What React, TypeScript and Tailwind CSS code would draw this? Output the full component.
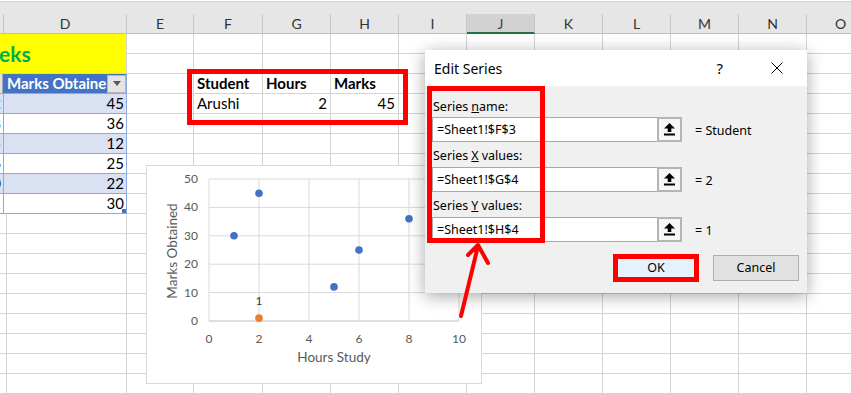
import React from "react";

const COLS =
    "grid-cols-[4px_123px_67px_69px_68px_68px_68px_68px_68px_68px_68px_68px_68px]";
const LETTERS = ["C", "D", "E", "F", "G", "H", "I", "J", "K", "L", "M", "N", "O"];
const HOURS = ["2", "8", "5", "6", "10", "1"];
const MARKS = ["45", "36", "12", "25", "22", "30"];

// chart data (hours, marks)
const POINTS: [number, number][] = [
    [2, 45],
    [8, 36],
    [5, 12],
    [6, 25],
    [10, 22],
    [1, 30],
];

function SheetCell({ r, c }: { r: number; c: number }) {
    const plain =
        "h-5 border-r border-b border-[#d4d4d4] overflow-hidden whitespace-nowrap flex items-center px-[3px] text-[15px] text-black";

    // table header C3:D3
    if (r === 3 && c === 0) {
        return (
            <div className="h-5 bg-[#4472c4] border-b border-[#8ea9db] flex">
                <div className="w-[3px] h-full bg-[#e1e1e1] border-r border-[#a6a6a6]" />
            </div>
        );
    }
    if (r === 3 && c === 1) {
        return (
            <div className="h-5 bg-[#4472c4] border-b border-r border-[#8ea9db] flex items-center pl-[3px] overflow-hidden">
                <span className="flex-1 overflow-hidden whitespace-nowrap text-[15px] font-bold text-white">
                    Marks Obtaine
                </span>
                <span className="w-[19px] h-[18px] bg-[#e4e4e4] border border-[#b5b5b5] flex items-center justify-center shrink-0">
                    <svg width="8" height="5" viewBox="0 0 8 5">
                        <polygon points="0,0 8,0 4,5" fill="#595959" />
                    </svg>
                </span>
            </div>
        );
    }

    // banded rows
    if (r >= 4 && r <= 9 && c <= 1) {
        const band = r % 2 === 0 ? "bg-[#d9e1f2]" : "bg-white";
        const value = c === 0 ? HOURS[r - 4] : MARKS[r - 4];
        return (
            <div
                className={`relative h-5 ${band} border-b border-r border-[#8ea9db] flex items-center justify-end pr-[2px] overflow-hidden text-[15px] text-black`}
            >
                <span className="shrink-0">{value}</span>
                {r === 9 && c === 1 && (
                    <span className="absolute right-0 bottom-0 w-[4px] h-[4px] bg-[#4472c4]" />
                )}
            </div>
        );
    }

    // small table F3:H4
    if (r === 3 && c >= 3 && c <= 5) {
        const label = ["Student", "Hours", "Marks"][c - 3];
        return <div className={`${plain} font-bold`}>{label}</div>;
    }
    if (r === 4 && c === 3) {
        return <div className={plain}>Arushi</div>;
    }
    if (r === 4 && (c === 4 || c === 5)) {
        return <div className={`${plain} justify-end`}>{c === 4 ? "2" : "45"}</div>;
    }

    return <div className={plain} />;
}

function Sheet() {
    const cells: React.ReactNode[] = [];

    LETTERS.forEach((l, c) => {
        const selected = l === "J";
        cells.push(
            <div
                key={`h-${c}`}
                className={
                    selected
                        ? "h-5 bg-[#d2d2d2] border-r border-[#c6c6c6] border-b-2 border-b-[#217346] flex items-center justify-center text-[14px] text-[#444]"
                        : "h-5 bg-[#e6e6e6] border-r border-[#c6c6c6] border-b border-b-[#bdbdbd] flex items-center justify-center text-[14px] text-[#333]"
                }
            >
                {c === 0 ? "" : l}
            </div>
        );
    });

    for (let r = 1; r <= 19; r++) {
        for (let c = 0; c < LETTERS.length; c++) {
            if (r === 1 && c === 0) {
                cells.push(
                    <div
                        key="title"
                        className="col-span-2 row-span-2 bg-[#ffff00] border-r border-b border-[#d4d4d4] flex items-center overflow-hidden"
                    >
                        <span className="-ml-px text-[21px] font-bold text-[#00b050]">eks</span>
                    </div>
                );
                continue;
            }
            if ((r === 1 || r === 2) && c <= 1) continue;
            cells.push(<SheetCell key={`${r}-${c}`} r={r} c={c} />);
        }
    }

    return (
        <div className="font-['Lato',sans-serif]">
            <div className="h-[13px] bg-[#e6e6e6]">
                <div className="h-px mt-px bg-[#cfcfcf]" />
            </div>
            <div className={`grid ${COLS} auto-rows-[20px]`}>{cells}</div>
        </div>
    );
}

function Chart() {
    const X = (v: number) => 62 + v * 25;
    const Y = (v: number) => 155 - v * 2.84;
    const ticksY = [0, 10, 20, 30, 40, 50];
    const ticksX = [0, 2, 4, 6, 8, 10];

    return (
        <div className="absolute left-[146px] top-[165px] w-[336px] h-[219px] bg-white border border-[#d9d9d9]">
            <svg width="334" height="217" viewBox="0 0 334 217" className="font-['Lato',sans-serif]">
                {ticksY.map((v) => (
                    <line
                        key={`gy${v}`}
                        x1={X(0)}
                        x2={X(10)}
                        y1={Y(v)}
                        y2={Y(v)}
                        stroke={v === 0 ? "#bfbfbf" : "#d9d9d9"}
                        strokeWidth="1"
                    />
                ))}
                {ticksX.map((v) => (
                    <line
                        key={`gx${v}`}
                        x1={X(v)}
                        x2={X(v)}
                        y1={Y(50)}
                        y2={Y(0)}
                        stroke="#d9d9d9"
                        strokeWidth="1"
                    />
                ))}
                {ticksY.map((v) => (
                    <text key={`ty${v}`} x="51" y={Y(v) + 4} textAnchor="end" fontSize="12" fill="#595959">
                        {v}
                    </text>
                ))}
                {ticksX.map((v) => (
                    <text key={`tx${v}`} x={X(v)} y="177" textAnchor="middle" fontSize="12" fill="#595959">
                        {v}
                    </text>
                ))}
                <text x="187" y="196" textAnchor="middle" fontSize="13.5" fill="#595959">
                    Hours Study
                </text>
                <text
                    transform="translate(30 85) rotate(-90)"
                    textAnchor="middle"
                    fontSize="13.5"
                    fill="#595959"
                >
                    Marks Obtained
                </text>
                {POINTS.map(([h, m]) => (
                    <circle key={`p${h}`} cx={X(h)} cy={Y(m)} r="3.8" fill="#4472c4" />
                ))}
                <circle cx={X(2)} cy={Y(1)} r="3.8" fill="#ed7d31" />
                <text x={X(2)} y="139" textAnchor="middle" fontSize="12" fill="#404040">
                    1
                </text>
            </svg>
        </div>
    );
}

function UploadIcon() {
    return (
        <svg width="11" height="13" viewBox="0 0 11 13">
            <polygon points="5.5,0 11,5.5 7.3,5.5 7.3,9 3.7,9 3.7,5.5 0,5.5" fill="#000" />
            <rect x="0" y="10.5" width="11" height="2" fill="#000" />
        </svg>
    );
}

function RefField({ value, result }: { value: string; result: string }) {
    return (
        <div className="flex items-center">
            <div className="flex h-[25px] w-[250px] border border-[#a8a8a8] bg-white">
                <div className="flex-1 flex items-center pl-[4px] pt-[2px]">{value}</div>
                <div className="w-[25px] -my-px -mr-px border-2 border-[#b4b4b4] bg-[#f7f7f7] flex items-center justify-center">
                    <UploadIcon />
                </div>
            </div>
            <span className="ml-[13px] pt-[3px]">{result}</span>
        </div>
    );
}

function EditSeriesDialog() {
    return (
        <div className="absolute left-[425px] top-[50px] w-[382px] h-[243px] flex flex-col bg-[#f0f0f0] shadow-[0_3px_16px_rgba(0,0,0,0.35)] font-['Noto_Sans',sans-serif] text-black">
            <div className="h-9 shrink-0 bg-white flex items-center pl-[9px] pr-[24px]">
                <span className="text-[14px]">Edit Series</span>
                <span className="ml-auto text-[15px]">?</span>
                <svg width="12" height="12" viewBox="0 0 12 12" className="ml-[48px]">
                    <path d="M0.5 0.5 L11.5 11.5 M11.5 0.5 L0.5 11.5" stroke="#000" strokeWidth="1" />
                </svg>
            </div>

            <div className="relative flex-1 flex flex-col pl-[7px] pt-[10px] text-[12.5px]">
                <div className="h-[21px] flex items-center pl-px pt-[2px]">
                    Series <span className="underline ml-[3px]">n</span>ame:
                </div>
                <RefField value="=Sheet1!$F$3" result="= Student" />
                <div className="h-[25px] flex items-center pl-px pt-[3px]">
                    Series <span className="underline mx-[3px]">X</span> values:
                </div>
                <RefField value="=Sheet1!$G$4" result="= 2" />
                <div className="h-[25px] flex items-center pl-px pt-[3px]">
                    Series <span className="underline mx-[3px]">Y</span> values:
                </div>
                <RefField value="=Sheet1!$H$4" result="= 1" />

                <div className="mt-[13px] flex justify-end gap-[15px] pr-[8px]">
                    <div className="relative">
                        <button className="w-[84px] h-[26px] bg-[#e5f1fb] border border-[#0078d7]">OK</button>
                        <div className="absolute -inset-[1px] border-[5px] border-[#ff0000]" />
                    </div>
                    <button className="w-[86px] h-[26px] bg-[#e1e1e1] border border-[#adadad]">Cancel</button>
                </div>

                {/* annotation box round the three fields */}
                <div className="absolute left-[2px] top-0 w-[118px] h-[157px] border-[5px] border-[#ff0000]" />
            </div>
        </div>
    );
}

export default function App() {
    return (
        <div className="relative w-[851px] h-[394px] overflow-hidden bg-white">
            <Sheet />
            <Chart />

            {/* annotation box round F3:H4 */}
            <div className="absolute left-[187px] top-[69px] w-[221px] h-[56px] border-[5px] border-[#ff0000]" />

            <EditSeriesDialog />

            <svg
                className="absolute inset-0 pointer-events-none"
                width="851"
                height="394"
                viewBox="0 0 851 394"
            >
                <path
                    d="M461 316 L478 246 M468 255 L478 245 L488 263"
                    stroke="#ff0000"
                    strokeWidth="4"
                    strokeLinecap="round"
                    strokeLinejoin="round"
                    fill="none"
                />
            </svg>
        </div>
    );
}
